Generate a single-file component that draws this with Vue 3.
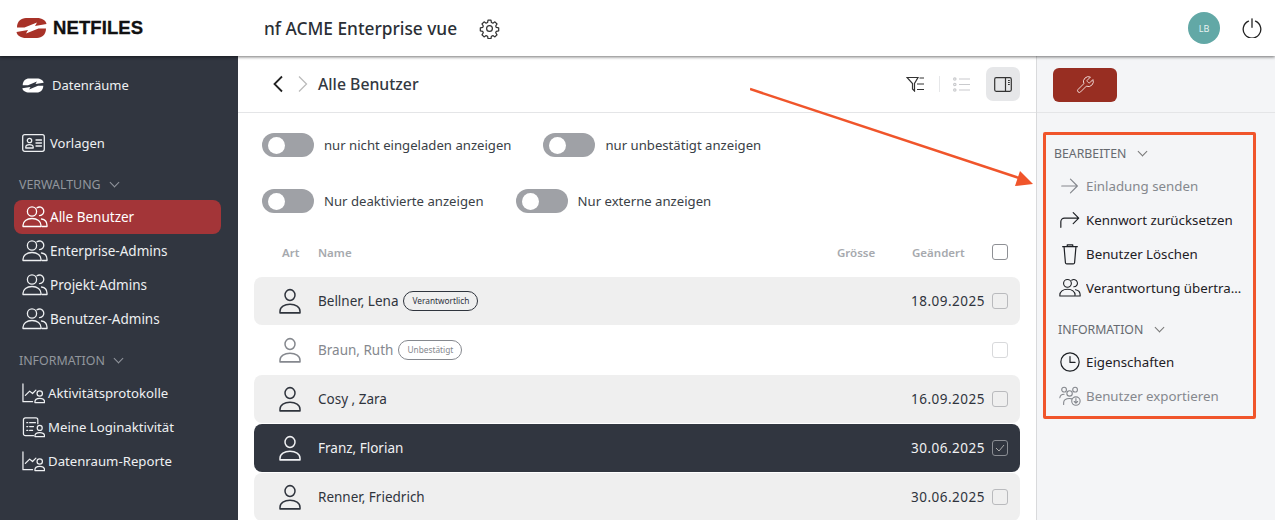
<script setup>
const sideMain = [
  { label: 'Alle Benutzer', icon: 'users', active: true },
  { label: 'Enterprise-Admins', icon: 'users' },
  { label: 'Projekt-Admins', icon: 'users' },
  { label: 'Benutzer-Admins', icon: 'users' }
]
const sideInfo = [
  { label: 'Aktivitätsprotokolle', icon: 'chart' },
  { label: 'Meine Loginaktivität', icon: 'log' },
  { label: 'Datenraum-Reporte', icon: 'chart' }
]
const filterRows = [
  [
    { label: 'nur nicht eingeladen anzeigen' },
    { label: 'nur unbestätigt anzeigen' }
  ],
  [
    { label: 'Nur deaktivierte anzeigen' },
    { label: 'Nur externe anzeigen' }
  ]
]
const users = [
  { name: 'Bellner, Lena', chip: 'Verantwortlich', date: '18.09.2025' },
  { name: 'Braun, Ruth', chip: 'Unbestätigt', date: '', muted: true },
  { name: 'Cosy , Zara', date: '16.09.2025' },
  { name: 'Franz, Florian', date: '30.06.2025', selected: true },
  { name: 'Renner, Friedrich', date: '30.06.2025' }
]
const editActions = [
  { label: 'Einladung senden', icon: 'arrow', off: true },
  { label: 'Kennwort zurücksetzen', icon: 'redo' },
  { label: 'Benutzer Löschen', icon: 'trash' },
  { label: 'Verantwortung übertragen', icon: 'users' }
]
const infoActions = [
  { label: 'Eigenschaften', icon: 'clock' },
  { label: 'Benutzer exportieren', icon: 'export', off: true }
]
</script>

<template>
  <div class="page">
    <svg class="defs" width="0" height="0">
      <symbol id="mark" viewBox="0 0 31 20">
        <path id="lobe" d="M1 9.500C1 3.500 5 0 10 0h11c5 0 9 2.500 9.500 6L19 8l2-3.500L8.500 9.500z" />
        <path d="M1 9.500C1 3.500 5 0 10 0h11c5 0 9 2.500 9.500 6L19 8l2-3.500L8.500 9.500z" transform="rotate(180 15.500 10)" />
      </symbol>
      <symbol id="users" viewBox="0 0 26 24">
        <circle cx="10" cy="6.500" r="4.600" />
        <path d="M15 2.800a4.300 4.300 0 1 1 2.500 7.800" />
        <path d="M1 21.500v-1.200c0-4 3.600-6.800 9-6.800s9 2.800 9 6.800v1.200z" />
        <path d="M19.500 14c3.500.5 5.500 3 5.500 6.300v1.200h-5" />
      </symbol>
      <symbol id="person" viewBox="0 0 24 24">
        <circle cx="12" cy="6.500" r="5" />
        <path d="M2 23v-1.500c0-4 4.400-6.500 10-6.500s10 2.500 10 6.500V23z" />
      </symbol>
      <symbol id="chart" viewBox="0 0 24 24">
        <path d="M1 2v18.500h10" />
        <path d="M3.500 14l4.500-4.500 3 2.500 3.500-3.500" />
        <circle cx="18.500" cy="12" r="2.800" />
        <path d="M13.500 21.500v-.8c0-2 2-3.700 5-3.700s5 1.700 5 3.700v.8z" />
      </symbol>
      <symbol id="log" viewBox="0 0 24 24">
        <path d="M12 20.500H3.500a2 2 0 0 1-2-2V4a2 2 0 0 1 2-2h11a2 2 0 0 1 2 2v4" />
        <path d="M5 7h1M8 7h6M5 11h1M8 11h4M5 15h1M8 15h3" />
        <circle cx="18.500" cy="12.500" r="2.600" />
        <path d="M13.500 21.500v-.8c0-2 2-3.400 5-3.400s5 1.400 5 3.400v.8z" />
      </symbol>
      <symbol id="arrow" viewBox="0 0 24 24">
        <path d="M3 12h17M12.500 4.500L20 12l-7.500 7.500" />
      </symbol>
      <symbol id="redo" viewBox="0 0 24 24">
        <path d="M2 20v-6a4 4 0 0 1 4-4h15M15.500 4l6 6-6 6" />
      </symbol>
      <symbol id="trash" viewBox="0 0 24 24">
        <path d="M4 4h16M9 4V2h6v2M5.500 4l1.500 17.500a1.500 1.500 0 0 0 1.500 1.300h7a1.500 1.500 0 0 0 1.500-1.300L18.500 4" />
      </symbol>
      <symbol id="clock" viewBox="0 0 24 24">
        <circle cx="12" cy="12" r="10" />
        <path d="M12 6v6.500h5.500" />
      </symbol>
      <symbol id="export" viewBox="0 0 26 24">
        <circle cx="6" cy="4.500" r="2.800" />
        <circle cx="19" cy="4.500" r="2.800" />
        <circle cx="12.500" cy="9" r="3.200" />
        <path d="M1 14c.3-2.500 2.300-4 5-4" />
        <path d="M5.500 22v-2c0-3 3-5 7-5 1 0 2 .1 2.800.4" />
        <circle cx="20" cy="18" r="5" />
        <path d="M20 15v5M18 18.500l2 2 2-2" />
      </symbol>
    </svg>

    <header class="topbar">
      <div class="logo">
        <svg class="logo-mark" width="31" height="20"><use href="#mark" /></svg>
        <span class="logo-text">NETFILES</span>
      </div>
      <div class="project">nf ACME Enterprise vue</div>
      <svg class="gear" width="21" height="21" viewBox="0 0 24 24" fill="none" stroke="#333" stroke-width="1.400" stroke-linejoin="round">
        <path d="M10.300 2.500h3.400l.5 2.700 1.700.7 2.300-1.500 2.400 2.400-1.500 2.300.7 1.700 2.700.5v3.400l-2.700.5-.7 1.700 1.500 2.300-2.400 2.400-2.300-1.500-1.700.7-.5 2.700h-3.400l-.5-2.700-1.700-.7-2.300 1.500-2.400-2.400 1.500-2.300-.7-1.700-2.700-.5v-3.400l2.700-.5.700-1.700-1.500-2.300 2.400-2.400 2.300 1.500 1.700-.7z" />
        <circle cx="12" cy="12" r="3.300" />
      </svg>
      <div class="avatar">LB</div>
      <svg class="power" width="20" height="20" viewBox="0 0 20 20" fill="none" stroke="#222" stroke-width="1.300" stroke-linecap="round">
        <path d="M6.500 3.200a8.800 8.800 0 1 0 7 0" />
        <path d="M10 0.800v8.500" />
      </svg>
    </header>

    <div class="body">
      <aside class="sidebar">
        <a class="side-item first">
          <svg class="side-logo" width="22" height="15"><use href="#mark" /></svg>
          <span class="side-logo-label">Datenräume</span>
        </a>
        <a class="side-item templates">
          <svg class="side-icon line" width="23" height="18" viewBox="0 0 23 18">
            <rect x="0.700" y="0.700" width="21.600" height="16.600" rx="2" />
            <circle cx="7.500" cy="6.500" r="2.200" />
            <path d="M3.800 14v-.8c0-1.500 1.500-2.500 3.700-2.500s3.700 1 3.700 2.500v.8zM14 6h5.500M14 9h5.500M14 12h5.500" />
          </svg>
          <span>Vorlagen</span>
        </a>

        <div class="side-head">VERWALTUNG <span class="chev"></span></div>
        <a v-for="item in sideMain" :key="item.label" class="side-item" :class="{ active: item.active }">
          <svg class="side-icon line" width="26" height="24"><use :href="'#' + item.icon" /></svg>
          <span>{{ item.label }}</span>
        </a>

        <div class="side-head">INFORMATION <span class="chev"></span></div>
        <a v-for="item in sideInfo" :key="item.label" class="side-item report">
          <svg class="side-icon line" width="23" height="23"><use :href="'#' + item.icon" /></svg>
          <span>{{ item.label }}</span>
        </a>
      </aside>

      <main class="content">
        <div class="toolbar">
          <svg class="nav" width="12" height="18" viewBox="0 0 12 18" fill="none" stroke="#222" stroke-width="1.800"><path d="M10 1.500L2.500 9l7.500 7.500" /></svg>
          <svg class="nav next" width="12" height="18" viewBox="0 0 12 18" fill="none" stroke="#bbb" stroke-width="1.300"><path d="M2 1.500L9.500 9 2 16.500" /></svg>
          <h1>Alle Benutzer</h1>
          <div class="tools">
            <svg width="20" height="16" viewBox="0 0 20 16" fill="none" stroke="#333" stroke-width="1.200"><path d="M1 1.500h11L8.500 7.500V15l-2-2V7.500zM13.500 2h4.500M11 8h7M11 13.500h7" /></svg>
            <span class="tool-sep"></span>
            <svg width="18" height="15" viewBox="0 0 18 15" fill="none" stroke="#c9cacd" stroke-width="1.200"><circle cx="1.800" cy="2" r="1.200" /><circle cx="1.800" cy="7.500" r="1.200" /><circle cx="1.800" cy="13" r="1.200" /><path d="M6 2h11M6 7.500h11M6 13h11" /></svg>
            <button class="panel-btn">
              <svg width="18" height="15" viewBox="0 0 18 15" fill="none" stroke="#333" stroke-width="1.200"><rect x="0.700" y="0.700" width="16.600" height="13.600" rx="1.500" /><path d="M11.500 1v13M14 3.500h1.800M14 5.500h1.800M14 7.500h1.800" /></svg>
            </button>
          </div>
        </div>

        <div class="filters">
          <div v-for="(row, i) in filterRows" :key="i" class="filter-row">
            <label v-for="f in row" :key="f.label" class="filter">
              <span class="toggle"><span class="knob"></span></span>
              <span>{{ f.label }}</span>
            </label>
          </div>
        </div>

        <div class="thead">
          <span class="th-art">Art</span>
          <span class="th-name">Name</span>
          <span class="th-size">Grösse</span>
          <span class="th-date">Geändert</span>
          <span class="check head-check"></span>
        </div>

        <div
          v-for="u in users"
          :key="u.name"
          class="row"
          :class="{ muted: u.muted, selected: u.selected }"
        >
          <svg class="person line" width="24" height="26" viewBox="0 0 24 24" preserveAspectRatio="none"><use href="#person" /></svg>
          <div class="name">
            {{ u.name }}
            <span v-if="u.chip" class="chip">{{ u.chip }}</span>
          </div>
          <div class="date">{{ u.date }}</div>
          <span class="check">
            <svg v-if="u.selected" width="10" height="8" viewBox="0 0 10 8" fill="none" stroke="#aaa" stroke-width="1"><path d="M1 4l3 3 5-6" /></svg>
          </span>
        </div>
      </main>

      <aside class="actions">
        <div class="actions-top">
          <button class="tool-btn">
            <svg width="20" height="20" viewBox="0 0 24 24" fill="none" stroke="#f0d9d6" stroke-width="1.200" stroke-linejoin="round"><path d="M14.700 6.300a1 1 0 0 0 0 1.400l1.600 1.600a1 1 0 0 0 1.400 0l3.800-3.800a6 6 0 0 1-7.900 7.900l-6.900 6.900a2.100 2.100 0 0 1-3-3l6.900-6.900a6 6 0 0 1 7.900-7.900z" /></svg>
          </button>
        </div>
        <div class="action-list">
          <div class="action-head">BEARBEITEN <span class="chev dark"></span></div>
          <a v-for="a in editActions" :key="a.label" class="action" :class="{ off: a.off }">
            <svg class="line" width="22" height="22"><use :href="'#' + a.icon" /></svg>
            <span class="action-label">{{ a.label }}</span>
          </a>
          <div class="action-head info">INFORMATION <span class="chev dark"></span></div>
          <a v-for="a in infoActions" :key="a.label" class="action" :class="{ off: a.off }">
            <svg class="line" width="22" height="22"><use :href="'#' + a.icon" /></svg>
            <span class="action-label">{{ a.label }}</span>
          </a>
        </div>
      </aside>
    </div>

    <!-- annotation on top of the screenshot -->
    <div class="callout-box"></div>
    <svg class="callout-arrow" width="300" height="110" viewBox="0 0 300 110">
      <path d="M0 2L272 92" fill="none" stroke="#f0552b" stroke-width="2.500" />
      <path d="M283 97l-18 2 5-15z" fill="#f0552b" />
    </svg>
  </div>
</template>

<style>
html, body {
  margin: 0;
  overflow: hidden;
}
</style>

<style scoped>
* {
  box-sizing: border-box;
}

.page {
  position: relative;
  width: 1275px;
  height: 520px;
  overflow: hidden;
  background: #fff;
  font-family: "Noto Sans", "Open Sans", sans-serif;
  font-size: 14px;
  color: #2f343d;
}

.defs {
  position: absolute;
}

.line {
  fill: none;
  stroke: currentColor;
  stroke-width: 1.300;
  stroke-linejoin: round;
  stroke-linecap: round;
  flex: none;
}

.topbar {
  position: relative;
  z-index: 2;
  display: flex;
  align-items: center;
  height: 56px;
  background: #fff;
  box-shadow: 0 1px 3px rgba(0, 0, 0, .55);
}

.logo {
  display: flex;
  align-items: center;
  gap: 6px;
  width: 264px;
  padding-left: 16px;
}

.logo-mark {
  fill: #a83228;
}

.logo-text {
  font-family: "Liberation Sans", sans-serif;
  font-weight: 700;
  font-size: 18.500px;
  letter-spacing: .1px;
  color: #111;
  -webkit-text-stroke: .3px #111;
}

.project {
  font-size: 17.300px;
  font-weight: 500;
  color: #2b2f36;
  width: 205px;
  white-space: nowrap;
}

.gear {
  margin-left: 10px;
}

.avatar {
  width: 32px;
  height: 32px;
  margin-left: auto;
  border-radius: 50%;
  background: #62a8a6;
  color: #e8f3f2;
  font-size: 9px;
  display: flex;
  align-items: center;
  justify-content: center;
}

.power {
  margin: 0 13px 0 22px;
}

.body {
  display: flex;
  height: 464px;
}

.sidebar {
  flex: none;
  width: 238px;
  padding: 12px 17px 0 14px;
  background: #313640;
  color: #eef0f2;
  font-size: 13.500px;
}

.side-item {
  display: flex;
  align-items: center;
  gap: 2px;
  height: 34px;
  padding-left: 8px;
  border-radius: 8px;
  white-space: nowrap;
}

.side-item.active {
  background: #a33538;
  color: #fff;
}

.side-logo {
  fill: #fff;
}

.side-logo-label {
  margin-left: 6px;
  font-size: 13px;
}

.side-item.templates {
  margin-top: 24px;
  margin-bottom: 12px;
  gap: 5px;
  font-size: 13px;
}

.side-item.report {
  gap: 3px;
  font-size: 13.200px;
}

.side-head {
  display: flex;
  align-items: center;
  height: 24px;
  margin-bottom: 4px;
  padding-left: 5px;
  font-size: 12.400px;
  color: #92969d;
}

.side-item + .side-head {
  margin-top: 12px;
}

.side-item.templates + .side-head {
  margin-top: 0;
}

.chev {
  display: inline-block;
  width: 7px;
  height: 7px;
  margin: -3px 0 0 10px;
  border-right: 1px solid #92969d;
  border-bottom: 1px solid #92969d;
  transform: rotate(45deg);
}

.chev.dark {
  margin-left: 13px;
  border-color: #777;
}

.content {
  flex: none;
  width: 798px;
  padding: 0 16px;
}

.toolbar {
  display: flex;
  align-items: center;
  height: 57px;
  margin: 0 -16px;
  padding: 0 16px 0 34px;
  border-bottom: 1px solid #e4e5e7;
}

.nav.next {
  margin-left: 13px;
}

h1 {
  margin: 0 0 0 9px;
  font-size: 15.800px;
  font-weight: 500;
  color: #333841;
}

.tools {
  display: flex;
  align-items: center;
  margin-left: auto;
}

.tool-sep {
  width: 1px;
  height: 16px;
  margin: 0 13px;
  background: #e6e7e9;
}

.panel-btn {
  display: flex;
  align-items: center;
  justify-content: center;
  width: 34px;
  height: 34px;
  margin-left: 15px;
  border: 0;
  border-radius: 7px;
  background: #e6e7e9;
}

.filters {
  padding: 20px 0 0 8px;
}

.filter-row {
  display: flex;
  gap: 32px;
  height: 24px;
  margin-bottom: 32px;
}

.filter {
  display: flex;
  align-items: center;
  gap: 10px;
  font-size: 13.150px;
  color: #3a3f47;
}

.toggle {
  display: flex;
  align-items: center;
  width: 52px;
  height: 24px;
  padding-left: 6px;
  border-radius: 12px;
  background: #9fa1a6;
}

.knob {
  width: 17px;
  height: 17px;
  border-radius: 50%;
  background: #fff;
}

.thead {
  display: flex;
  align-items: center;
  height: 16px;
  margin: -1px 0 17px;
  font-size: 11.500px;
  font-weight: 600;
  color: #a6a9ae;
}

.th-art {
  margin-left: 28px;
  width: 36px;
}

.th-name {
  flex: 1;
}

.th-size {
  width: 75px;
}

.th-date {
  width: 80px;
}

.check {
  display: flex;
  align-items: center;
  justify-content: center;
  flex: none;
  width: 16px;
  height: 16px;
  border: 1.500px solid #c6c7ca;
  border-radius: 3px;
}

.head-check {
  margin-right: 12px;
  border-color: #8e9095;
}

.row {
  display: flex;
  align-items: center;
  height: 48px;
  margin-bottom: 1px;
  padding-right: 12px;
  border-radius: 8px;
  background: #efefef;
  color: #2f343d;
}

.person {
  margin: 0 16px 0 24px;
  stroke-width: 1.500;
}

.name {
  display: flex;
  align-items: center;
  gap: 5px;
  flex: 1;
  font-size: 13.500px;
}

.chip {
  height: 20px;
  padding: 0 8px;
  border: 1px solid #2f343d;
  border-radius: 10px;
  font-size: 8.300px;
  line-height: 18px;
}

.date {
  margin-right: 7px;
  font-size: 13.500px;
  letter-spacing: .5px;
}

.row .check {
  border-color: #b9babd;
}

.row.muted {
  background: transparent;
  color: #85888e;
}

.row.muted .chip {
  border-color: #85888e;
}

.row.muted .check {
  border-color: #d8d9db;
}

.row.selected {
  background: #313640;
  color: #f0f1f3;
}

.row.selected .check {
  border-color: #8a8d93;
}

.actions {
  flex: none;
  width: 239px;
  border-left: 1px solid #d9dadc;
  background: #f4f5f7;
}

.actions-top {
  height: 57px;
  padding: 12px 0 0 16px;
  border-bottom: 1px solid #e4e5e7;
}

.tool-btn {
  display: flex;
  align-items: center;
  justify-content: center;
  width: 64px;
  height: 34px;
  border: 0;
  border-radius: 6px;
  background: #982e22;
}

.action-list {
  padding: 28px 0 0 17px;
  width: 208px;
}

.action-head {
  display: flex;
  align-items: center;
  height: 24px;
  margin-bottom: 4px;
  font-size: 12.300px;
  color: #666a70;
}

.action-head.info {
  margin: 12px 0 4px 4px;
}

.action {
  display: flex;
  align-items: center;
  gap: 5px;
  height: 34px;
  padding-left: 5px;
  color: #1d2025;
  font-size: 13.300px;
}

.action.off {
  color: #85888e;
}

.action-label {
  overflow: hidden;
  white-space: nowrap;
  text-overflow: ellipsis;
}

.callout-box {
  position: absolute;
  left: 1043px;
  top: 132px;
  width: 213px;
  height: 287px;
  border: 3px solid #f0552b;
  border-radius: 2px;
  pointer-events: none;
}

.callout-arrow {
  position: absolute;
  left: 750px;
  top: 87px;
  pointer-events: none;
}
</style>
